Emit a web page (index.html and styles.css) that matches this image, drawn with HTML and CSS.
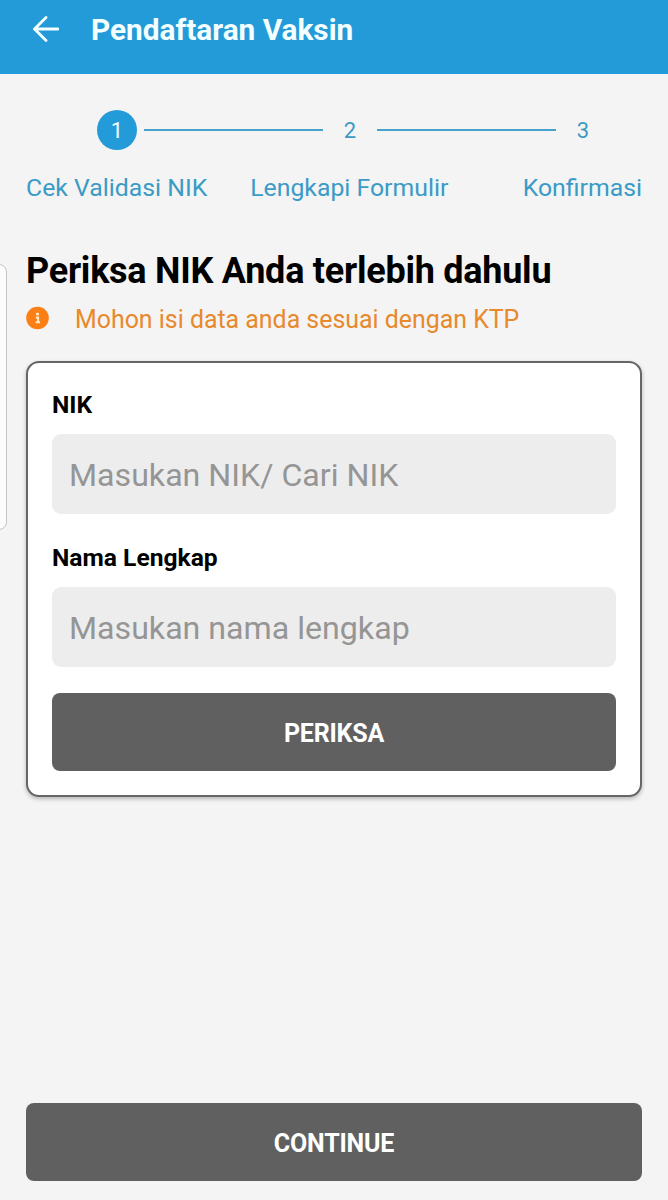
FILE: index.html
```html
<!DOCTYPE html>
<html lang="id">
<head>
    <meta charset="UTF-8">
    <meta name="viewport" content="width=device-width, initial-scale=1.0">
    <title>Pendaftaran Vaksin</title>
    <link rel="stylesheet" href="styles.css">
</head>
<body>
    <header class="topbar">
        <svg class="back" viewBox="0 0 26 26" width="26" height="26">
            <path d="M25 13H2M13 1.5L1.5 13 13 24.5" fill="none" stroke="#f4ffff" stroke-width="2.8" stroke-linecap="round" stroke-linejoin="round"/>
        </svg>
        <h1>Pendaftaran Vaksin</h1>
    </header>

    <main class="page">
        <div class="steps">
            <span class="step active">1</span>
            <span class="line"></span>
            <span class="step">2</span>
            <span class="line"></span>
            <span class="step">3</span>
        </div>
        <div class="step-labels">
            <span>Cek Validasi NIK</span>
            <span>Lengkapi Formulir</span>
            <span>Konfirmasi</span>
        </div>

        <h2>Periksa NIK Anda terlebih dahulu</h2>
        <p class="info">
            <svg viewBox="0 0 24 24" width="24" height="24">
                <circle cx="11.5" cy="12" r="11.3" fill="#fb7f14"/>
                <circle cx="11.5" cy="8" r="1.6" fill="#ffe9c8"/>
                <path d="M9.8 11.5h2.3V16M9.5 16.3H14" fill="none" stroke="#ffe9c8" stroke-width="2"/>
            </svg>
            <span>Mohon isi data anda sesuai dengan KTP</span>
        </p>

        <form class="card">
            <label for="nik">NIK</label>
            <input id="nik" type="text" placeholder="Masukan NIK/ Cari NIK">
            <label for="nama">Nama Lengkap</label>
            <input id="nama" type="text" placeholder="Masukan nama lengkap">
            <button type="button">PERIKSA</button>
        </form>

        <button type="button" class="continue">CONTINUE</button>
    </main>
    <div class="edge-handle"></div>
</body>
</html>
```

FILE: styles.css
```css
* {
    box-sizing: border-box;
}
body {
    margin: 0;
    height: 1200px;
    display: flex;
    flex-direction: column;
    overflow: hidden;
    font-family: Roboto, sans-serif;
    background-color: #f4f4f4;
    color: #000;
}
.topbar {
    display: flex;
    align-items: center;
    height: 74px;
    padding: 0 33px 15px;
    background-color: #249bd9;
    color: #f4ffff;
}
.back {
    margin-top: -1px;
}
.topbar h1 {
    margin: 1px 0 0 32px;
    font-size: 29.8px;
    font-weight: 700;
    line-height: 32px;
}
.page {
    flex: 1;
    display: flex;
    flex-direction: column;
    padding: 36px 26px 19px;
}
.steps {
    display: flex;
    align-items: center;
    padding: 0 39px 0 71px;
    color: #3a9bc6;
}
.step {
    width: 40px;
    height: 40px;
    font-size: 22px;
    line-height: 41px;
    text-align: center;
}
.step.active {
    border-radius: 50%;
    background-color: #249bd9;
    color: #f4ffff;
}
.line {
    flex: 1;
    height: 2px;
    margin: 0 7px;
    background-color: #46a1cd;
}
.step-labels {
    display: flex;
    margin-top: 23px;
    font-size: 24.8px;
    line-height: 30px;
    color: #3a9bc6;
}
.step-labels span:nth-child(2) {
    margin: 0 auto 0 43px;
}
h2 {
    margin: 46px 0 0;
    font-size: 36px;
    font-weight: 700;
    letter-spacing: -0.25px;
    line-height: 44px;
    white-space: nowrap;
}
.info {
    display: flex;
    align-items: center;
    margin: 12px 0 0;
    font-size: 24.9px;
    line-height: 30px;
    color: #e8892c;
}
.info svg {
    margin: -4px 25px 0 0;
}
.card {
    display: flex;
    flex-direction: column;
    height: 436px;
    margin-top: 26px;
    padding: 26px 24px 24px;
    border: 2px solid #666;
    border-radius: 13px;
    background-color: #fff;
    box-shadow: 0 2px 4px rgba(0, 0, 0, 0.25);
}
.card label {
    font-size: 24.6px;
    font-weight: 700;
    line-height: 32px;
}
.card input {
    flex: none;
    height: 80px;
    margin: 13px 0 28px;
    padding: 2px 17px 0;
    border: 0;
    border-radius: 9px;
    background-color: #ededed;
    font-family: inherit;
    font-size: 32.15px;
}
.card input + button {
    margin-top: -2px;
}
.card input::placeholder {
    color: #959595;
}
button {
    flex: none;
    height: 78px;
    padding: 2px 0 0;
    border: 0;
    border-radius: 8px;
    background-color: #606060;
    color: #fff;
    font-family: inherit;
    font-size: 25px;
    font-weight: 700;
    letter-spacing: -0.2px;
}
.continue {
    margin-top: auto;
}
/* pull tab peeking in from the left side of the screen */
.edge-handle {
    position: absolute;
    left: -10px;
    top: 264px;
    width: 17px;
    height: 266px;
    border: 1px solid #c4c4c4;
    border-radius: 8px;
    background-color: #fcfcfc;
}
```
